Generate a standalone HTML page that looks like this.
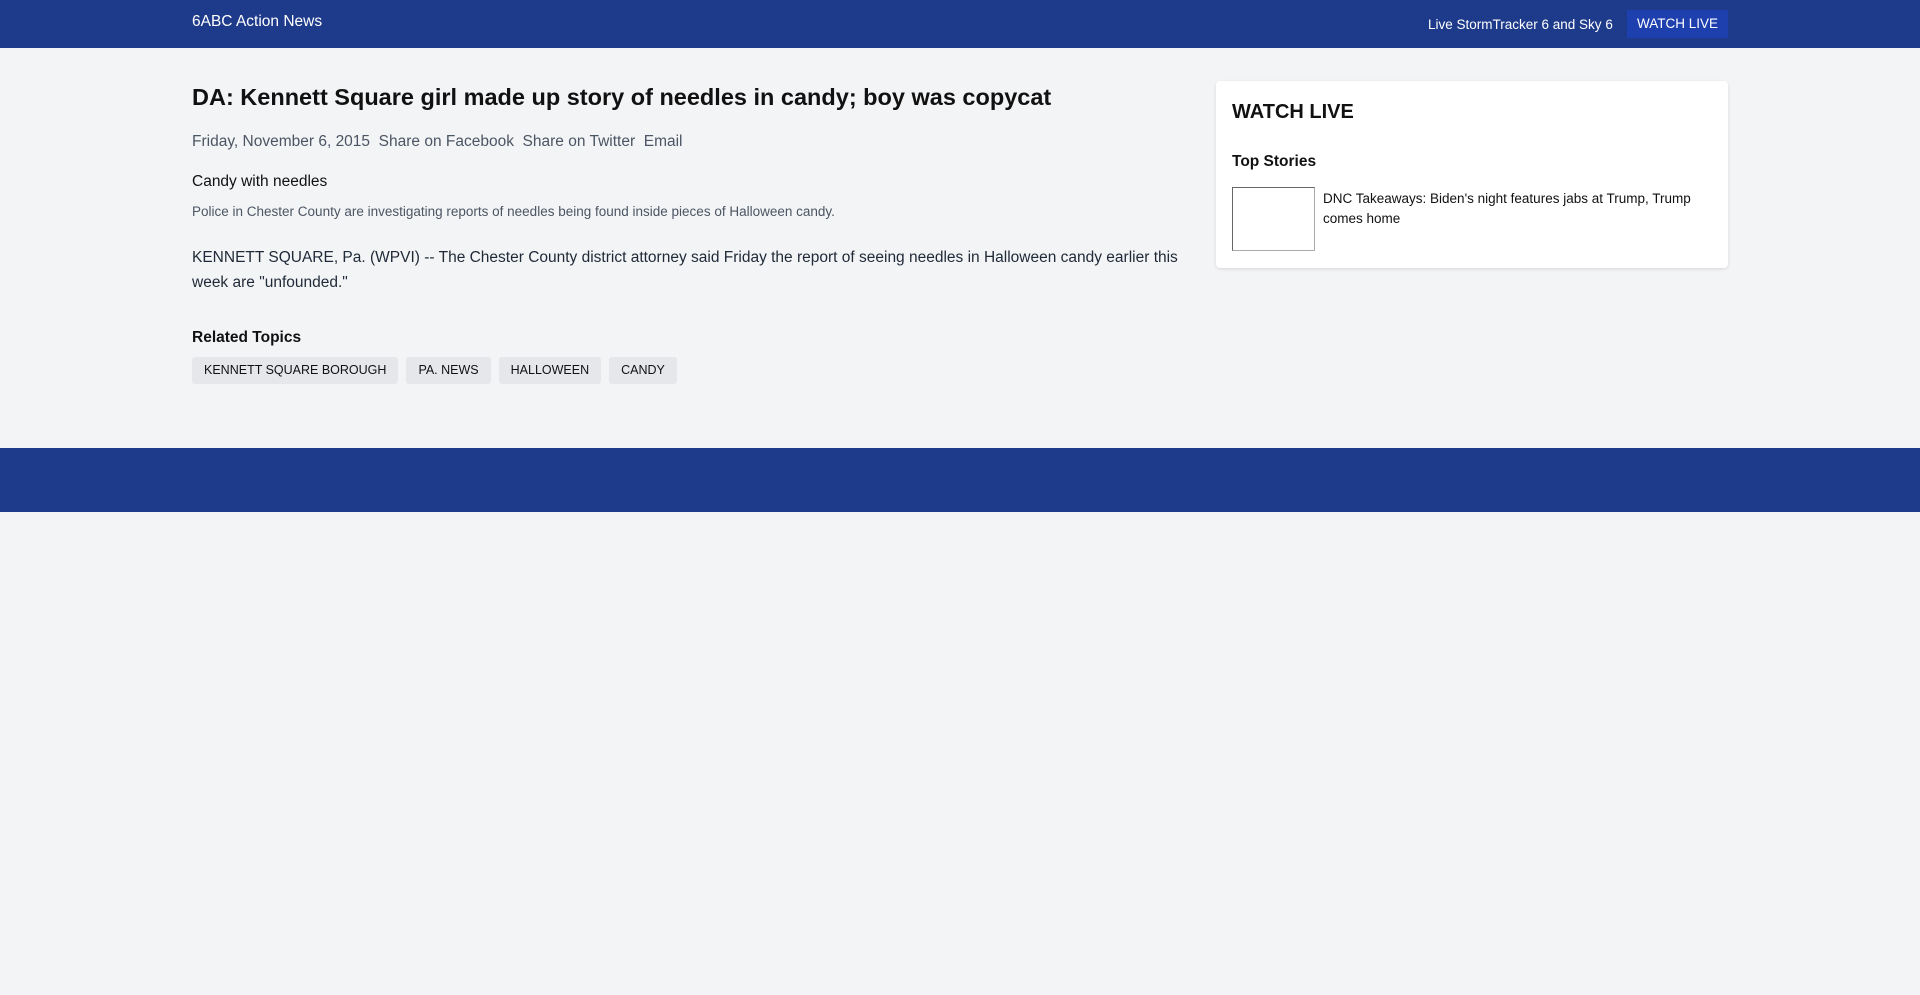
<!DOCTYPE html>
<html><head><meta charset="utf-8"><style>
*{box-sizing:border-box;margin:0;padding:0}
body{width:1920px;height:995px;background:#f3f4f6;font-family:"Liberation Sans",sans-serif;color:#111;position:relative;overflow:hidden}
.hdr{position:absolute;left:0;top:0;width:1920px;height:48px;background:#1e3a8a;color:#fff}
.logo{position:absolute;left:192px;top:13px;font-size:15.5px}
.nav1{position:absolute;left:1428px;top:17px;font-size:13.5px}
.btn{position:absolute;left:1627px;top:10px;width:101px;height:28px;background:#1e40af;font-size:13.5px;text-align:center;line-height:28px}
.a{position:absolute;left:192px}
h1{position:absolute;left:192px;top:84px;font-size:23.5px;font-weight:bold;white-space:nowrap}
.meta{top:133px;font-size:15.5px;color:#4b5563}
.sub{top:173px;font-size:15.5px}
.cap{top:204px;font-size:13.5px;color:#4b5563}
.body{top:246px;width:990px;font-size:15.5px;line-height:24.5px;color:#1f2937}
.rt{top:329px;font-size:15.5px;font-weight:bold}
.tags{top:357px;display:flex;gap:8px}
.tag{height:27px;line-height:27px;padding:0 12px;background:#e5e7eb;border-radius:3px;font-size:12.5px;text-transform:uppercase}
.card{position:absolute;left:1216px;top:81px;width:512px;height:187px;background:#fff;border-radius:4px;box-shadow:0 1px 3px rgba(0,0,0,.12)}
.wl{position:absolute;left:16px;top:20px;font-size:20px;font-weight:bold}
.ts{position:absolute;left:16px;top:72px;font-size:15.5px;font-weight:bold}
.th{position:absolute;left:16px;top:106px;width:83px;height:64px;border:1px solid #666;border-bottom-color:#aaa;border-right-color:#aaa}
.st{position:absolute;left:107px;top:108px;width:390px;font-size:13.5px;line-height:20px}
.ftr{position:absolute;left:0;top:448px;width:1920px;height:64px;background:#1e3a8a}
</style></head><body>
<div class="hdr"><div class="logo">6ABC Action News</div><div class="nav1">Live StormTracker 6 and Sky 6</div><div class="btn">WATCH LIVE</div></div>
<h1>DA: Kennett Square girl made up story of needles in candy; boy was copycat</h1>
<div class="a meta">Friday, November 6, 2015&nbsp; Share on Facebook&nbsp; Share on Twitter&nbsp; Email</div>
<div class="a sub">Candy with needles</div>
<div class="a cap">Police in Chester County are investigating reports of needles being found inside pieces of Halloween candy.</div>
<div class="a body">KENNETT SQUARE, Pa. (WPVI) -- The Chester County district attorney said Friday the report of seeing needles in Halloween candy earlier this week are "unfounded."</div>
<div class="a rt">Related Topics</div>
<div class="a tags"><div class="tag">Kennett Square Borough</div><div class="tag">Pa. News</div><div class="tag">Halloween</div><div class="tag">Candy</div></div>
<div class="card"><div class="wl">WATCH LIVE</div><div class="ts">Top Stories</div><div class="th"></div><div class="st">DNC Takeaways: Biden's night features jabs at Trump, Trump comes home</div></div>
<div class="ftr"></div>
</body></html>
